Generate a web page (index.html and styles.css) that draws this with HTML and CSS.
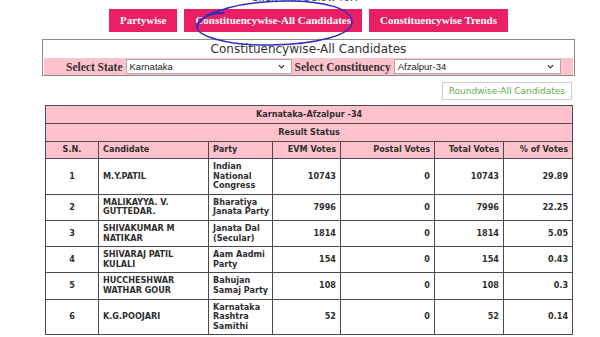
FILE: index.html
```html
<!DOCTYPE html>
<html lang="en">
<head>
<meta charset="utf-8">
<title>Constituencywise-All Candidates</title>
<link rel="stylesheet" href="styles.css">
</head>
<body>
<div class="page">
  <p class="intro">Click link below for:</p>
  <nav class="tabs">
    <a class="tab">Partywise</a>
    <a class="tab">Constituencywise-All Candidates</a>
    <a class="tab">Constituencywise Trends</a>
  </nav>

  <section class="panel">
    <h1 class="panel-title">Constituencywise-All Candidates</h1>
    <div class="filters">
      <span class="filter-label">Select State</span>
      <div class="select select-state">
        <span>Karnataka</span>
        <svg class="chev" viewBox="0 0 8 5" width="7" height="5"><path d="M1 1 L4 4 L7 1" fill="none" stroke="#333" stroke-width="1.4"/></svg>
      </div>
      <span class="filter-label">Select Constituency</span>
      <div class="select select-const">
        <span>Afzalpur-34</span>
        <svg class="chev" viewBox="0 0 8 5" width="7" height="5"><path d="M1 1 L4 4 L7 1" fill="none" stroke="#333" stroke-width="1.4"/></svg>
      </div>
    </div>
  </section>

  <div class="actions">
    <a class="btn-outline">Roundwise-All Candidates</a>
  </div>

  <table class="results">
    <colgroup>
      <col class="c-sn"><col class="c-cand"><col class="c-party"><col class="c-evm"><col class="c-postal"><col class="c-total"><col class="c-pct">
    </colgroup>
    <thead>
      <tr class="caption-row"><th colspan="7">Karnataka-Afzalpur -34</th></tr>
      <tr class="caption-row"><th colspan="7">Result Status</th></tr>
      <tr class="col-row">
        <th class="center">S.N.</th>
        <th class="left">Candidate</th>
        <th class="left party">Party</th>
        <th class="right">EVM Votes</th>
        <th class="right">Postal Votes</th>
        <th class="right">Total Votes</th>
        <th class="right">% of Votes</th>
      </tr>
    </thead>
    <tbody>
      <tr>
        <td class="center">1</td><td>M.Y.PATIL</td><td class="party">Indian National Congress</td>
        <td class="right">10743</td><td class="right">0</td><td class="right">10743</td><td class="right">29.89</td>
      </tr>
      <tr>
        <td class="center">2</td><td>MALIKAYYA. V. GUTTEDAR.</td><td class="party">Bharatiya Janata Party</td>
        <td class="right">7996</td><td class="right">0</td><td class="right">7996</td><td class="right">22.25</td>
      </tr>
      <tr>
        <td class="center">3</td><td>SHIVAKUMAR M NATIKAR</td><td class="party">Janata Dal (Secular)</td>
        <td class="right">1814</td><td class="right">0</td><td class="right">1814</td><td class="right">5.05</td>
      </tr>
      <tr>
        <td class="center">4</td><td>SHIVARAJ PATIL KULALI</td><td class="party">Aam Aadmi Party</td>
        <td class="right">154</td><td class="right">0</td><td class="right">154</td><td class="right">0.43</td>
      </tr>
      <tr>
        <td class="center">5</td><td>HUCCHESHWAR WATHAR GOUR</td><td class="party">Bahujan Samaj Party</td>
        <td class="right">108</td><td class="right">0</td><td class="right">108</td><td class="right">0.3</td>
      </tr>
      <tr>
        <td class="center">6</td><td>K.G.POOJARI</td><td class="party">Karnataka Rashtra Samithi</td>
        <td class="right">52</td><td class="right">0</td><td class="right">52</td><td class="right">0.14</td>
      </tr>
    </tbody>
  </table>
</div>

<svg class="annotation" viewBox="0 0 600 60" width="600" height="60">
  <path d="M224 13 C212 13 200 17 197 25 C194 36 228 46 272 45 C318 44 352 35 352 22 C352 9 326 1 288 1 C254 1 226 6 206 16 C202 19 199 22 197 27" fill="none" stroke="#2b2fc4" stroke-width="1.5" stroke-linecap="round"/>
  <path d="M206 15 C211 13 217 12 223 13" fill="none" stroke="#2b2fc4" stroke-width="1.3" stroke-linecap="round"/>
</svg>
</body>
</html>
```

FILE: styles.css
```css
* { box-sizing: border-box; }

body {
  margin: 0;
  background: #ffffff;
  font-family: "DejaVu Sans", Verdana, sans-serif;
  color: #333;
  position: relative;
  overflow: hidden;
}

.page {
  width: 533px;
  margin-left: 42px;
}

.intro {
  margin: -8px 0 0;
  height: 12px;
  line-height: 12px;
  font-size: 11px;
  text-align: center;
  color: #444;
  padding-right: 8px;
}

.tabs {
  display: flex;
  justify-content: center;
  gap: 7px;
  margin-top: 5px;
}

.tab {
  display: block;
  height: 23px;
  line-height: 23px;
  padding: 0 11px;
  background: #e91e63;
  color: #fff;
  font-family: "Liberation Serif", "Times New Roman", serif;
  font-weight: bold;
  font-size: 11px;
  white-space: nowrap;
}

.panel {
  margin-top: 7px;
  border: 1px solid #8a8a8a;
}

.panel-title {
  margin: 0;
  height: 18px;
  line-height: 18px;
  font-size: 12px;
  font-weight: normal;
  text-align: center;
  color: #333;
}

.filters {
  display: flex;
  align-items: center;
  gap: 3px;
  height: 17px;
  margin: 0 1px;
  padding-left: 22px;
  background: #ffc2cd;
}

.filter-label {
  font-family: "Liberation Serif", "Times New Roman", serif;
  font-weight: bold;
  font-size: 11.5px;
  color: #333;
  white-space: nowrap;
}

.select {
  display: flex;
  align-items: center;
  justify-content: space-between;
  height: 15px;
  padding: 0 6px 0 3px;
  background: #fff;
  border: 1px solid #a9a9a9;
  font-family: "Liberation Sans", Arial, sans-serif;
  font-size: 9.5px;
  color: #222;
}

.select-state { width: 166px; }
.select-const { width: 167px; }

.chev { display: block; }

.actions {
  display: flex;
  justify-content: flex-end;
  margin-top: 6px;
  padding-right: 3px;
}

.btn-outline {
  display: block;
  height: 18px;
  line-height: 16px;
  padding: 0 6px;
  border: 1px solid #cfcfcf;
  background: #fff;
  color: #5fae4a;
  font-size: 9px;
  white-space: nowrap;
}

.results {
  margin: 5px 0 0 3px;
  width: 527px;
  border-collapse: collapse;
  table-layout: fixed;
  font-family: "DejaVu Sans Condensed", "DejaVu Sans", sans-serif;
  font-stretch: condensed;
  font-size: 9px;
  font-weight: bold;
  color: #2e2e2e;
}

.c-sn { width: 53px; }
.c-cand { width: 110px; }
.c-party { width: 64px; }
.c-evm { width: 68px; }
.c-postal { width: 94px; }
.c-total { width: 69px; }
.c-pct { width: 69px; }

.results th,
.results td {
  border: 1px solid #4a4a4a;
  padding: 3px 4px;
  line-height: 9.6px;
  vertical-align: middle;
  text-align: left;
}

.results .party {
  padding-left: 4px;
  padding-right: 1px;
}

.results thead th {
  background: #ffc2cd;
}

.caption-row th {
  height: 18px;
  text-align: center;
}

.col-row th {
  height: 17px;
}

.results .center { text-align: center; }
.results .left { text-align: left; }
.results .right { text-align: right; }

.annotation {
  position: absolute;
  top: 0;
  left: 0;
  pointer-events: none;
}
```
